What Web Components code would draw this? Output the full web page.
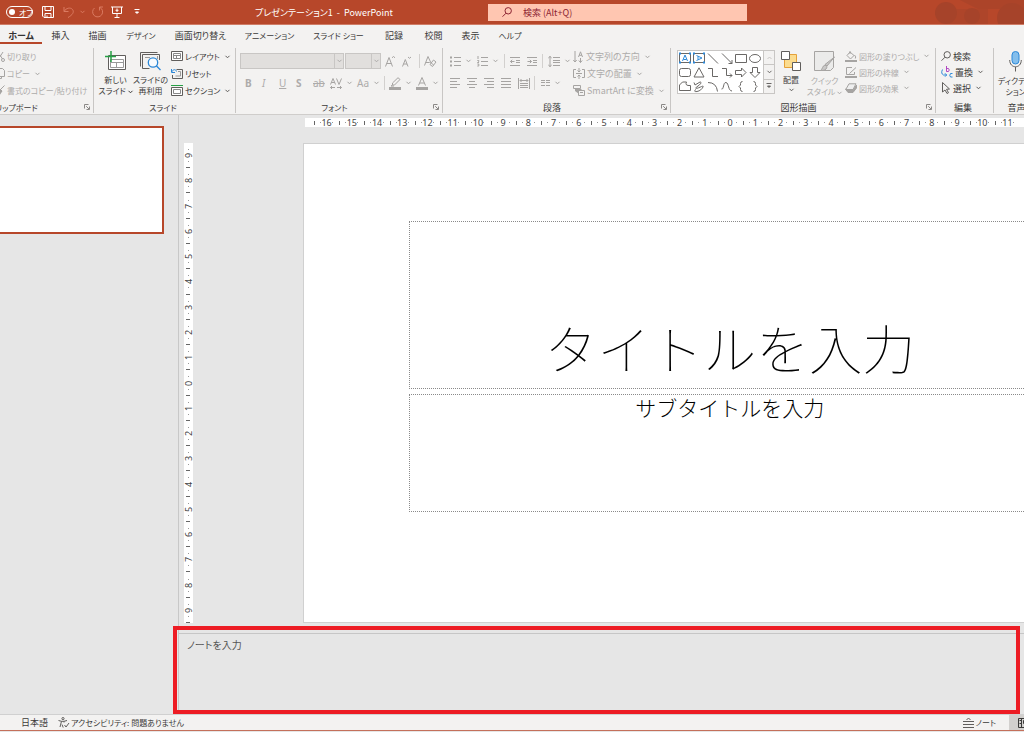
<!DOCTYPE html>
<html lang="ja">
<head>
<meta charset="utf-8">
<meta name="viewport" content="width=device-width, initial-scale=1">
<title>プレゼンテーション1 - PowerPoint</title>
<style>
  html, body { margin: 0; height: 100%; }
  body {
    font-family: "Noto Sans CJK JP", sans-serif;
    font-size: 9px;
    line-height: 11px;
    font-feature-settings: "palt";
    color: #3b3a39;
    background: #e6e6e6;
    overflow: hidden;
  }
</style>
</head>
<body>
<presentation-app></presentation-app>

<script>
/* ---------- icons: [width, height, drawing] ---------- */
const ICONS = {
  save: [12, 12, '<path d="M.5.5h11v11H2L.5 10z M3 .5v4h6v-4 M3 11.500v-4h6v4 M5 9.500v2"/>'],
  undo: [12, 12, '<path d="M1 1v4.500h4.500 M1.200 5.300C3 2 7.500 1 9.500 3.500S9.500 9 5 11.500"/>'],
  redo: [13, 12, '<path d="M8.500 4.500V1h3.500 M9 1.500A5 5 0 1 1 3.500 2"/>'],
  show: [12, 12, '<path d="M0 1h12 M1.500 1v6.500h9V1 M6 7.500V11 M3.500 11.500h5 M6 2.500v3.500 M4.500 4.300h3"/>'],
  more: [6, 6, '<path d="M.5.5h5"/><path d="M1.500 3l1.500 1.500L4.500 3z" fill="currentColor"/>'],
  chev: [5, 4, '<path d="M.5.8 2.500 2.800 4.500.8"/>'],
  up: [5, 4, '<path d="M.5 3 2.500 1 4.500 3"/>'],
  search: [10, 10, '<circle cx="6.200" cy="3.800" r="3.200"/><path d="M4 6.200.500 9.700"/>'],
  launch: [6, 6, '<path d="M.5 4.500v-4h4 M2.200 2.200l3 3 M5.500 2.500v3h-3"/>'],
  cut: [9, 11, '<path d="M2 1l4.500 7 M7 1 2.500 8"/><circle cx="2" cy="9" r="1.500"/><circle cx="7" cy="9" r="1.500"/>'],
  copy: [9, 11, '<path d="M3.500.500h3l2 2v6h-5z M3.500 2.500h-3v8h5v-2"/>'],
  brush: [9, 11, '<path d="M8.500.500 5 4 M3 3l3 3-3 4.500H.500z" /><path d="M3 3l3 3-2 2-3-3z" fill="currentColor"/>'],
  newslide: [21, 20, '<path fill="#fff" d="M3.500 4.500h17v14h-17z"/><path stroke="#999" d="M5.500 8.500h13v8h-13z M5.500 11.500h13 M11.500 11.500v5"/><path stroke="#27a046" stroke-width="1.500" d="M6 0v11 M0 5.500h11"/>'],
  reuse: [21, 20, '<path d="M.500 15.500V1.500h17 M19.500 9V3.500h-17v14h7"/><path stroke="#999" d="M17.500 5v3 M5 6.500h5"/><circle cx="13" cy="11.500" r="4.700" fill="#f7fbfe" stroke="#2b88d8" stroke-width="1.300"/><path stroke="#2b88d8" stroke-width="1.300" d="M16.300 14.800 20.500 19"/>'],
  layout: [12, 11, '<path fill="#fff" d="M.500.500h11v9H.500z"/><path stroke="#888" d="M2.500 2.500h7v5h-7z M2.500 4.500h7 M5.500 4.500v3"/>'],
  reset: [12, 11, '<path d="M5.500 1.500h6v9h-10V7"/><path stroke="#999" d="M7 3.500h2.500v4.500h-5"/><path stroke="#2b88d8" d="M.500 1v3.500H4 M.700 4C2 1 5 1 5.500 3.500"/>'],
  section: [12, 11, '<path stroke="#27a046" d="M0 .500h12"/><path fill="#fff" d="M.500 2.500h11v8H.500z"/><path stroke="#888" d="M2.500 4.500h7v4h-7z"/>'],
  bullets: [11, 10, '<path d="M4 1.500h7 M4 5.500h7 M4 9.500h7"/><path stroke-width="2" d="M0 1.500h2 M0 5.500h2 M0 9.500h2"/>'],
  numbers: [11, 10, '<path d="M4 1.500h7 M4 5.500h7 M4 9.500h7"/><path d="M1 0v3 M.300 4.500h1.500v1L.500 6.500h1.500 M.300 8h1.500v2H.300"/>'],
  outdent: [10, 9, '<path d="M0 .500h10 M6 3.500h4 M6 5.500h4 M0 8.500h10 M4.500 4.500H.500 M2.200 2.800.500 4.500l1.700 1.700"/>'],
  indent: [10, 9, '<path d="M0 .500h10 M6 3.500h4 M6 5.500h4 M0 8.500h10 M.500 4.500h4 M2.800 2.800l1.700 1.700-1.700 1.700"/>'],
  spacing: [12, 11, '<path d="M5 1.500h7 M5 4.500h7 M5 6.500h7 M5 9.500h7 M2 0v11 M.300 2 2 .500 3.700 2 M.300 9 2 10.500 3.700 9"/>'],
  left: [10, 10, '<path d="M0 .500h10 M0 3.500h7 M0 6.500h10 M0 9.500h7"/>'],
  center: [10, 10, '<path d="M0 .500h10 M2 3.500h6 M0 6.500h10 M2 9.500h6"/>'],
  right: [10, 10, '<path d="M0 .500h10 M3 3.500h7 M0 6.500h10 M3 9.500h7"/>'],
  justify: [10, 10, '<path d="M0 .500h10 M0 3.500h10 M0 6.500h10 M0 9.500h10"/>'],
  spread: [12, 11, '<path d="M.500 0v11 M11.500 0v11 M2 5.500h8 M2 7.500h8 M2 9.500h8 M2 2.500h8 M3.500 1 2 2.500 3.500 4 M8.500 1 10 2.500 8.500 4"/>'],
  columns: [9, 8, '<path d="M0 1.500h4 M5 1.500h4 M0 3.500h4 M5 3.500h4 M0 6.500h4 M5 6.500h4"/>'],
  textdir: [11, 12, '<path d="M2 0v11 M.300 9 2 11l1.700-2 M7.500 7v4.500 M5.800 9.500l1.700 2 1.700-2 M5.500 6 7.500.800 9.500 6 M6.200 4.300h2.600"/>'],
  textpos: [12, 11, '<path d="M3 1.500H.500v8H3 M9 1.500h2.500v8H9 M3 5.500h6 M6 0v4 M4.500 2.500 6 4l1.500-1.500 M6 11V7 M4.500 8.500 6 7l1.500 1.500"/>'],
  smartart: [12, 11, '<path d="M.500.500h7v3 M.500.500v3h3 M5.500 5.500h6v5h-6z M7 7.500h3"/><path fill="currentColor" stroke="none" d="M2 3h5l2 2H6v4L2 6z"/>'],
  pen: [12, 13, '<path d="M9 .700 11 2.500 5.500 8H3.500V6z M3.500 8 2 9h3"/><path stroke="none" fill="currentColor" d="M0 10h12v3H0z"/>'],
  color: [12, 13, '<path d="M2.500 8.500 6 .500l3.500 8 M3.700 6h4.600"/><path stroke="none" fill="currentColor" d="M0 10h12v3H0z"/>'],
  biga: [10, 11, '<path d="M.500 10.500 4 1.500l3.500 9 M1.700 7.500h4.600 M7 1.800 8.500.500 10 1.800"/>'],
  smalla: [9, 11, '<path d="M.500 10.500 3.300 3.500l2.700 7 M1.500 8h3.500 M6 1l1.500 1.300L9 1"/>'],
  clear: [12, 12, '<path d="M.500 10.500 4 1.500l3 6.500 M1.700 7.500h4 M6 9.500 9.500 5 12 7l-3.500 4.500z M7.200 8l2.500 2"/>'],
  tracking: [12, 13, '<path d="M.500 7.500 3 1.500l2.500 6 M1.300 5.500h3.400 M6.500 1.500 9 7.500l2.500-6 M.500 10.500h4.500 M2 9 .500 10.500 2 12 M7 10.500h4.500 M10 9l1.500 1.500L10 12"/>'],
  arrange: [20, 20, '<path fill="#fbdc8f" stroke="#e5a13a" d="M3.500 3.500h12v13h-12z"/><path fill="#fff" d="M.500.500h8v8h-8z M11.500 11.500h8v8h-8z"/>'],
  quick: [21, 21, '<path fill="#ebebea" d="M.500.500h19v16l-3 3H.500z"/><path fill="#c9c8c7" d="M20.500 6 13 15l-2-1.500z M11 14c2 .500 2.500 2.500 1 4-1 1.500-4 1.500-5.500 1.500 2-1 2-5 4.500-5.500z"/>'],
  fill: [12, 11, '<path d="M5 1 9 4.500 5.500 8 2 4.500z M5 3V0 M9.500 4q2 2 .800 3.500"/><path stroke="none" fill="currentColor" d="M0 9h12v2H0z"/>'],
  outline: [12, 11, '<path d="M7 .500H1.500v7H9.500V5 M11 .500 4.500 6.500"/><path stroke="none" fill="currentColor" d="M0 9h12v2H0z"/>'],
  effect: [12, 10, '<path fill="currentColor" d="M.500 6 3 9.500h5L11.500 5V2L8 7H2z"/><path fill="#eee" d="M4 .800h7L8 6.500H.800z"/>'],
  replace: [12, 12, '<path stroke="#b146c2" d="M5.500 0v5.500 M5.500 2.500h2q1.500 1.500 0 3h-2"/><path stroke="#2b88d8" d="M11.500 7.500h-2q-1.500 2 0 3.500h2 M1.500 3.500q-2 4 1 5.500h3 M4 7.300 5.700 9 4 10.700"/>'],
  select: [10, 12, '<path d="M1.500.500v9.500l2.500-2 2 3.500 1.500-.800-2-3.400 3-.300z"/>'],
  mic: [13, 21, '<rect x="3" y=".500" width="7" height="12.500" rx="3.500" fill="#83beec" stroke="#2b88d8"/><path d="M.700 9c0 9 11.600 9 11.600 0 M6.500 16v4.500"/>'],
  access: [11, 11, '<circle cx="5" cy="1.600" r="1.100"/><path d="M.500 3.500l3 .800L2 10 M9 3.500l-3 .800v1.200 M3.500 4.300H6 M6.500 8l1.500 2 3-4 M4 7.500l1.200 3"/>'],
  notes: [11, 11, '<path d="M3.500 3 5.500 1l2 2 M0 4.500h11 M0 7.500h11 M0 10.500h11"/>'],
  normal: [12, 10, '<path d="M.500.500h11v9H.500z M3.500 .5v9 M5.500 2.500h4v3H5.500z M1.500 2.500H3 M1.500 5.500H3"/>'],
  sTextH: [12, 11, '<path d="M.500.500h11v9H.500z"/><path stroke="#2b88d8" d="M3.500 8 6 2l2.500 6 M4.500 6.500h3"/><path stroke="#2b88d8" stroke-width="2" stroke-dasharray="2 8 2 7" d="M0 .5h12 M0 9.500h12"/>'],
  sTextV: [12, 11, '<path d="M.500.500h11v9H.500z"/><path stroke="#2b88d8" d="M3.500 2.500 9 5 3.500 7.500 M5 3.500v3"/><path stroke="#2b88d8" stroke-width="2" stroke-dasharray="2 8 2 7" d="M0 .5h12 M0 9.500h12"/>'],
  sLine: [12, 11, '<path d="M1 .500 11 10.500"/>'],
  sArrow: [12, 11, '<path d="M1 .500 11 10.500 M11 7v3.500H7.500"/>'],
  sRect: [12, 11, '<path d="M.500 1.500h11v8H.500z"/>'],
  sOval: [12, 11, '<ellipse cx="6" cy="5.500" rx="5.500" ry="4"/>'],
  sRound: [12, 11, '<rect x=".500" y="1.500" width="11" height="8" rx="2"/>'],
  sTri: [12, 11, '<path d="M6 .800 11 10H1z"/>'],
  sElbow: [12, 11, '<path d="M1 1.500h4.500v8h5.500"/>'],
  sElbowA: [12, 11, '<path d="M1 1.500h4.500v7h5.500 M9 6.500l2 2-2 2"/>'],
  sRight: [12, 11, '<path d="M.500 3.500h6V1L11 5.500 6.500 10V7.500h-6z"/>'],
  sDown: [12, 11, '<path d="M3.500.500h5v5h2.500L6 10.500 1 5.500H3.500z"/>'],
  sFree: [12, 11, '<path d="M.500 9.500V4l3-3h4q-2 4 4 3.500v5z"/>'],
  sScrib: [12, 11, '<path d="M1 1.500 2 4 7 1C9 1 8 3 5 5s-3 3 0 2 6-3 5-1-3 4-6 4.500-3-1-1-2"/>'],
  sArc: [12, 11, '<path d="M1 1.500q8.500 0 9.500 9"/>'],
  sCurve: [12, 11, '<path d="M.500 8C3 9 2 1 5 1.500S7 10 11 10"/>'],
  sBraceL: [12, 11, '<path d="M7.500.500Q5.500.500 5.500 2.500V4L4 5.500 5.500 7v1.500Q5.500 10.500 7.500 10.500"/>'],
  sBraceR: [12, 11, '<path d="M4.500.500Q6.500.500 6.500 2.500V4L8 5.500 6.500 7v1.500Q6.500 10.500 4.500 10.500"/>']
};

const define = (name, template, setup) => {
  const t = document.createElement('template');
  t.innerHTML = template;
  customElements.define(name, class extends HTMLElement {
    constructor() {
      super();
      this.attachShadow({ mode: 'open' }).append(t.content.cloneNode(true));
    }
    connectedCallback() { if (setup) setup(this, this.shadowRoot); }
  });
};

define('ui-icon', '<style>:host{display:block;flex:none}svg{display:block;overflow:visible}</style><svg aria-hidden="true" fill="none" stroke="currentColor"></svg>',
  (host, root) => {
    const [w, h, body] = ICONS[host.getAttribute('name')];
    const svg = root.querySelector('svg');
    svg.setAttribute('width', w);
    svg.setAttribute('height', h);
    svg.setAttribute('viewBox', `0 0 ${w} ${h}`);
    svg.innerHTML = body;
  });

/* Ribbon command: icon, optional label in the slot, optional drop-down arrow. */
define('ribbon-command', `
  <style>
    :host { display: block; flex: none; color: #3b3a39; --icon: #605e5c; }
    :host([off]) { color: #adabaa; --icon: #a6a4a2; }
    :host([small]), :host([big]) { font-size: 8px; }
    button { all: unset; box-sizing: border-box; display: flex; align-items: center; gap: 2px; width: 100%; height: 100%; white-space: nowrap; }
    ui-icon { color: var(--icon); }
    .chev { margin-left: 3px; }
    :host([big]) button { flex-direction: column; justify-content: flex-start; gap: 3px; text-align: center; }
    :host([big]) .chev { margin: 0; }
  </style>
  <button type="button"><slot></slot></button>`,
  (host, root) => {
    const button = root.querySelector('button');
    const make = (name, cls) => {
      const i = document.createElement('ui-icon');
      i.setAttribute('name', name);
      if (cls) i.className = cls;
      return i;
    };
    if (host.hasAttribute('icon')) button.prepend(make(host.getAttribute('icon')));
    if (host.hasAttribute('menu')) button.append(make('chev', 'chev'));
    if (host.hasAttribute('label')) button.setAttribute('aria-label', host.getAttribute('label'));
    if (host.hasAttribute('off')) button.disabled = true;
  });

define('ribbon-group', `
  <style>
    :host { display: flex; flex-direction: column; flex: none; box-sizing: border-box; border-right: 1px solid #c8c6c4; height: 65px; }
    .body { display: flex; height: 53px; }
    footer { display: flex; align-items: center; height: 12px; padding-right: 3px; }
    :host([small]) footer { font-size: 8px; }
    span { flex: 1; text-align: center; white-space: nowrap; }
    ui-icon { color: #8a8886; }
  </style>
  <div class="body"><slot></slot></div>
  <footer><span></span></footer>`,
  (host, root) => {
    root.querySelector('span').textContent = host.getAttribute('name');
    if (host.hasAttribute('launcher')) {
      const i = document.createElement('ui-icon');
      i.setAttribute('name', 'launch');
      root.querySelector('footer').append(i);
    }
  });

define('combo-box', `
  <style>
    :host { display: flex; box-sizing: border-box; height: 16px; border: 1px solid #c8c6c4; background: #e1dfdd; color: #adabaa; }
    select { all: unset; flex: 1; min-width: 0; }
    span { display: flex; align-items: center; justify-content: center; width: 8px; border-left: 1px solid #c8c6c4; }
  </style>
  <select disabled><option></option></select><span><ui-icon name="chev"></ui-icon></span>`,
  (host, root) => root.querySelector('select').setAttribute('aria-label', host.getAttribute('label')));

define('title-bar', `
  <style>
    :host { display: grid; grid-template-columns: 488fr 259fr 277fr; align-items: center; height: 25px; box-sizing: border-box; border-bottom: 1px solid #cf7c66; background: #b7472a; color: #fff; }
    .left { display: flex; align-items: center; height: 24px; }
    label { display: flex; align-items: center; gap: 4px; box-sizing: border-box; width: 27px; height: 12px; margin-left: 6px; padding-left: 2px; border: 1px solid #fff; border-radius: 6px; font-size: 8px; white-space: nowrap; }
    input[type=checkbox] { appearance: none; flex: none; width: 6px; height: 6px; margin: 0; border-radius: 50%; background: #fff; }
    .tools { display: flex; align-items: center; margin-left: 9px; }
    .undo { width: 28px; } .redo { width: 20px; } .save { width: 21px; } .show { width: 23px; }
    ribbon-command { color: #fff; --icon: #fff; }
    .dim { --icon: #da7a61; }
    h1 { margin: 0 0 0 115px; font-size: 9px; font-weight: 400; white-space: pre; }
    .search { display: flex; align-items: center; gap: 11px; height: 17px; padding-left: 14px; background: #ffc6b1; color: #8d2432; }
    .search input { all: unset; flex: 1; min-width: 0; font-size: 9px; }
    .search input::placeholder { color: #8d2432; opacity: 1; }
    .art { justify-self: end; height: 24px; width: 192px; max-width: 100%; }
    .art svg { display: block; width: 100%; height: 24px; }
  </style>
  <div class="left">
    <label><input type="checkbox" role="switch"><span>オフ</span></label>
    <div class="tools">
      <ribbon-command class="save" icon="save" label="上書き保存"></ribbon-command>
      <ribbon-command class="undo dim" icon="undo" menu label="元に戻す"></ribbon-command>
      <ribbon-command class="redo dim" icon="redo" label="繰り返し"></ribbon-command>
      <ribbon-command class="show" icon="show" label="先頭から開始"></ribbon-command>
      <ribbon-command icon="more" label="カスタマイズ"></ribbon-command>
    </div>
    <h1>プレゼンテーション1  -  PowerPoint</h1>
  </div>
  <div class="search"><ui-icon name="search"></ui-icon><input type="search" aria-label="検索" placeholder="検索 (Alt+Q)"></div>
  <div class="art"><svg viewBox="0 0 192 24" preserveAspectRatio="xMaxYMid slice" aria-hidden="true">
    <g fill="#a6432a"><circle cx="114" cy="13" r="11"/><circle cx="140" cy="16" r="8"/><path d="M114 9h42v15h-42z" opacity=".5"/><circle cx="180" cy="18" r="15"/><path d="M128 0h64v9h-46z" opacity=".7"/></g>
  </svg></div>`);

define('tab-strip', `
  <style>
    :host { display: block; height: 20px; background: #f3f2f1; }
    nav { display: flex; height: 19px; }
    a { box-sizing: border-box; display: flex; align-items: center; justify-content: center; padding-top: 3px; font-size: 9px; color: inherit; text-decoration: none; white-space: nowrap; border-bottom: 2px solid transparent; flex: none; }
    a[aria-current] { font-weight: 700; border-color: #b7472a; color: #333; }
    .kana { font-size: 8px; }
    .w42 { width: 42px; } .w36 { width: 37px; } .w50 { width: 50px; } .w70 { width: 69px; }
  </style>
  <nav>
    <a class="w42" href="#home" aria-current="page">ホーム</a>
    <a class="w36" href="#insert">挿入</a>
    <a class="w36" href="#draw">描画</a>
    <a class="w50 kana" href="#design">デザイン</a>
    <a class="w70" href="#transitions">画面切り替え</a>
    <a class="w70 kana" href="#animations">アニメーション</a>
    <a class="w70 kana" href="#slideshow">スライド ショー</a>
    <a class="w42" href="#record">記録</a>
    <a class="w36" href="#review">校閲</a>
    <a class="w36" href="#view">表示</a>
    <a class="w42 kana" href="#help">ヘルプ</a>
  </nav>`);

define('shape-gallery', `
  <style>
    :host { display: flex; flex: none; box-sizing: border-box; width: 98px; height: 44px; border: 1px solid #c8c6c4; background: #fff; color: #6a6866; }
    .grid { display: grid; grid-template-columns: repeat(6, 14px); grid-auto-rows: 14px; justify-items: center; align-items: start; padding-top: 2px; flex: 1; box-sizing: border-box; }
    .bar { display: flex; flex-direction: column; width: 10px; border-left: 1px solid #c8c6c4; background: #f3f2f1; }
    .bar button { all: unset; flex: 1; display: flex; align-items: center; justify-content: center; border-bottom: 1px solid #c8c6c4; }
    .bar button:last-child { border: 0; }
    .bar button:disabled { color: #c8c6c4; }
  </style>
  <div class="grid"></div>
  <div class="bar">
    <button type="button" disabled aria-label="上へ"><ui-icon name="up"></ui-icon></button>
    <button type="button" aria-label="下へ"><ui-icon name="chev"></ui-icon></button>
    <button type="button" aria-label="その他"><ui-icon name="more"></ui-icon></button>
  </div>`,
  (host, root) => {
    root.querySelector('.grid').innerHTML = ['sTextH', 'sTextV', 'sLine', 'sArrow', 'sRect', 'sOval', 'sRound', 'sTri', 'sElbow', 'sElbowA', 'sRight', 'sDown', 'sFree', 'sScrib', 'sArc', 'sCurve', 'sBraceL', 'sBraceR']
      .map(n => `<ui-icon name="${n}"></ui-icon>`).join('');
  });

define('ribbon-panel', `
  <style>
    :host { display: flex; box-sizing: border-box; height: 70px; padding-top: 3px; background: #f3f2f1; border-bottom: 1px solid #cfcdcb; }
    .col { display: flex; flex-direction: column; }
    .col ribbon-command { height: 17px; }
    .tight ribbon-command { height: 16px; }
    .row { display: flex; align-items: center; height: 22px; }
    .sep { width: 1px; height: 14px; background: #d2d0ce; }
    .clip { width: 152px; margin-left: -58px; } .slide { width: 142px; } .font { width: 207px; } .para { width: 228px; } .shape { width: 265px; } .edit { width: 58px; } .voice { width: 48px; border: 0; }
    .clip .col { margin-left: 54px; }
    .w17 { width: 17px; } .w26 { width: 27px; }
    .b { font-weight: 700; } .i { font-style: italic; } .u { text-decoration: underline; } .s { text-decoration: line-through; }
    .glyph { font-family: "Noto Sans", "Noto Sans CJK JP", sans-serif; font-size: 10px; }
    .big { width: 35px; padding-top: 3px; }
    .mid { width: 32px; }
    .in { display: inline-block; }
  </style>
  <ribbon-group small class="clip" name="クリップボード" launcher>
    <div class="col">
      <ribbon-command off small icon="cut">切り取り</ribbon-command>
      <ribbon-command off small icon="copy" menu>コピー</ribbon-command>
      <ribbon-command off small icon="brush">書式のコピー/貼り付け</ribbon-command>
    </div>
  </ribbon-group>
  <ribbon-group small class="slide" name="スライド">
    <ribbon-command big class="big" style="margin-left:4px" icon="newslide"><span>新しい<br>スライド <ui-icon name="chev" class="in"></ui-icon></span></ribbon-command>
    <ribbon-command big class="big" icon="reuse"><span>スライドの<br>再利用</span></ribbon-command>
    <div class="col" style="margin-left:3px">
      <ribbon-command small icon="layout" menu>レイアウト</ribbon-command>
      <ribbon-command small icon="reset">リセット</ribbon-command>
      <ribbon-command small icon="section" menu>セクション</ribbon-command>
    </div>
  </ribbon-group>
  <ribbon-group small class="font" name="フォント" launcher>
    <div class="col" style="margin-left:4px; padding-top:2px">
      <div class="row">
        <combo-box label="フォント" style="width:104px"></combo-box>
        <combo-box label="フォント サイズ" style="width:36px; margin:0 4px 0 1px"></combo-box>
        <ribbon-command off class="w17" icon="biga" label="フォント サイズの拡大"></ribbon-command>
        <ribbon-command off class="w17" icon="smalla" label="フォント サイズの縮小"></ribbon-command>
        <div class="sep"></div>
        <ribbon-command off style="margin-left:4px" icon="clear" label="書式のクリア"></ribbon-command>
      </div>
      <div class="row glyph" style="padding-left:5px">
        <ribbon-command off class="w17"><span class="b">B</span></ribbon-command>
        <ribbon-command off class="w17"><span class="i">I</span></ribbon-command>
        <ribbon-command off class="w17"><span class="u">U</span></ribbon-command>
        <ribbon-command off class="w17"><span class="b">S</span></ribbon-command>
        <ribbon-command off class="w17"><span class="s">ab</span></ribbon-command>
        <ribbon-command off class="w26" icon="tracking" menu label="文字の間隔"></ribbon-command>
        <ribbon-command off class="w26" menu>Aa</ribbon-command>
        <div class="sep"></div>
        <ribbon-command off class="w26" style="margin-left:4px" icon="pen" menu label="蛍光ペンの色"></ribbon-command>
        <ribbon-command off icon="color" menu label="フォントの色"></ribbon-command>
      </div>
    </div>
  </ribbon-group>
  <ribbon-group class="para" name="段落" launcher>
    <div class="col" style="width:130px; padding-top:2px">
      <div class="row" style="padding-left:7px">
        <ribbon-command off class="w26" icon="bullets" menu label="箇条書き"></ribbon-command>
        <ribbon-command off class="w26" icon="numbers" menu label="段落番号"></ribbon-command>
        <div class="sep"></div>
        <ribbon-command off class="w17" style="margin-left:5px" icon="outdent" label="インデントを減らす"></ribbon-command>
        <ribbon-command off icon="indent" label="インデントを増やす"></ribbon-command>
        <div class="sep" style="margin:0 5px"></div>
        <ribbon-command off icon="spacing" menu label="行間"></ribbon-command>
      </div>
      <div class="row" style="padding-left:7px">
        <ribbon-command off class="w17" icon="left" label="左揃え"></ribbon-command>
        <ribbon-command off class="w17" icon="center" label="中央揃え"></ribbon-command>
        <ribbon-command off class="w17" icon="right" label="右揃え"></ribbon-command>
        <ribbon-command off class="w17" icon="justify" label="両端揃え"></ribbon-command>
        <ribbon-command off icon="spread" label="均等割り付け"></ribbon-command>
        <div class="sep" style="margin:0 6px 0 4px"></div>
        <ribbon-command off icon="columns" menu label="段"></ribbon-command>
      </div>
    </div>
    <div class="col">
      <ribbon-command off icon="textdir" menu>文字列の方向</ribbon-command>
      <ribbon-command off icon="textpos" menu>文字の配置</ribbon-command>
      <ribbon-command off icon="smartart" menu>SmartArt に変換</ribbon-command>
    </div>
  </ribbon-group>
  <ribbon-group class="shape" name="図形描画" launcher>
    <shape-gallery style="margin:2px 0 0 6px"></shape-gallery>
    <ribbon-command big class="big mid" icon="arrange" menu><span>配置</span></ribbon-command>
    <ribbon-command off big class="big" icon="quick"><span>クイック<br>スタイル <ui-icon name="chev" class="in"></ui-icon></span></ribbon-command>
    <div class="col tight" style="margin-left:3px">
      <ribbon-command off small icon="fill" menu>図形の塗りつぶし</ribbon-command>
      <ribbon-command off small icon="outline" menu>図形の枠線</ribbon-command>
      <ribbon-command off small icon="effect" menu>図形の効果</ribbon-command>
    </div>
  </ribbon-group>
  <ribbon-group class="edit" name="編集">
    <div class="col tight" style="margin-left:5px">
      <ribbon-command icon="search">検索</ribbon-command>
      <ribbon-command icon="replace" menu>置換</ribbon-command>
      <ribbon-command icon="select" menu>選択</ribbon-command>
    </div>
  </ribbon-group>
  <ribbon-group class="voice" name="音声">
    <ribbon-command big class="big" icon="mic" style="margin-left:4px"><span>ディクテー<br>ション</span></ribbon-command>
  </ribbon-group>`);

/* Ruler with one numbered cell per centimetre. */
define('slide-ruler', `
  <style>
    :host { display: flex; background: #fff; color: #444; font: 9px/9px "Noto Sans", sans-serif; box-sizing: border-box; --dot: #999; --tick: #666; }
    span { flex: 1; min-width: 0; min-height: 0; display: flex; align-items: center; justify-content: center;
      background: linear-gradient(var(--tick) 0 0) 0 50% / 1px 4px no-repeat, linear-gradient(var(--dot) 0 0) 25% 50% / 1px 1px no-repeat, linear-gradient(var(--dot) 0 0) 75% 50% / 1px 1px no-repeat; }
    :host([vertical]) { writing-mode: vertical-rl; transform: rotate(180deg); }
    :host([vertical]) span { background: linear-gradient(var(--tick) 0 0) 50% 0 / 4px 1px no-repeat, linear-gradient(var(--dot) 0 0) 50% 25% / 1px 1px no-repeat, linear-gradient(var(--dot) 0 0) 50% 75% / 1px 1px no-repeat; }
  </style>`,
  (host, root) => {
    const from = +host.getAttribute('from'), to = +host.getAttribute('to');
    for (let n = from; n <= to; n++) {
      const cell = document.createElement('span');
      cell.textContent = Math.abs(n);
      root.append(cell);
    }
  });

define('slide-canvas', `
  <style>
    :host { display: block; overflow: hidden; min-height: 0; }
    article { box-sizing: border-box; height: 100%; aspect-ratio: 16 / 9; padding: 77px 105px 110px; display: grid; grid-template-rows: minmax(0, 168fr) minmax(0, 118fr); gap: 5px; background: #fff; border: 1px solid #d0d0d0; color: #000; text-align: center; font-feature-settings: normal; }
    h2, p { margin: 0; box-sizing: border-box; border: 1px dotted #8a8a8a; }
    h2 { display: flex; align-items: flex-end; justify-content: center; font-size: 53px; line-height: 62px; font-weight: 100; padding-bottom: 10px; }
    p { font-size: 21px; line-height: 24px; font-weight: 300; }
  </style>
  <article><h2>タイトルを入力</h2><p>サブタイトルを入力</p></article>`);

define('notes-pane', `
  <style>
    :host { display: block; box-sizing: border-box; height: 81px; border-top: 1px solid #c6c6c6; }
    textarea { box-sizing: border-box; display: block; width: 100%; height: 100%; margin: 0; padding: 4px 8px; border: 0; outline: 0; resize: none; background: none; font: inherit; font-size: 10px; line-height: 14px; color: #555; }
    textarea::placeholder { color: #555; opacity: 1; }
  </style>
  <textarea aria-label="ノート" placeholder="ノートを入力"></textarea>`);

define('status-bar', `
  <style>
    :host { display: flex; align-items: center; box-sizing: border-box; height: 17px; border-top: 1px solid #d0d0d0; border-bottom: 1px solid #c4705b; background: #f3f2f1; padding-left: 21px; }
    .access { margin-left: 10px; }
    .notes { margin-left: auto; }
    .view { display: flex; align-items: center; align-self: stretch; width: 15px; margin-left: 13px; padding-left: 9px; box-sizing: border-box; background: #d2d0ce; overflow: hidden; }
  </style>
  <span>日本語</span>
  <ribbon-command small class="access" icon="access">アクセシビリティ: 問題ありません</ribbon-command>
  <ribbon-command small class="notes" icon="notes">ノート</ribbon-command>
  <div class="view"><ui-icon name="normal"></ui-icon></div>`);

define('presentation-app', `
  <style>
    :host { display: flex; flex-direction: column; min-height: 100vh; box-sizing: border-box; padding-bottom: 1px; }
    main { flex: 1; display: grid; grid-template-columns: 178px minmax(0, 1fr); min-height: 0; }
    aside { box-sizing: border-box; border-right: 1px solid #c8c8c8; padding-top: 11px; width: 179px; }
    .thumb { box-sizing: border-box; width: 164px; height: 108px; border: 2px solid #b7472a; border-left: 0; background: #fff; }
    .work { display: flex; flex-direction: column; min-width: 0; position: relative; }
    .editor { flex: 1; display: grid; grid-template: 9px minmax(0, 1fr) / 9px minmax(0, 1fr); gap: 16px 110px; padding: 3px 0 10px 6px; min-height: 0; }
    .h { grid-column: 2; padding: 0 4px 0 9px; margin-left: 2px; }
    .v { grid-row: 2; }
    notes-pane { margin-left: 1px; }
    .mark { position: absolute; inset: auto 4px 0 -5px; height: 88px; box-sizing: border-box; border: 4px solid #ed1c24; pointer-events: none; }
  </style>
  <title-bar></title-bar>
  <tab-strip></tab-strip>
  <ribbon-panel></ribbon-panel>
  <main>
    <aside><div class="thumb"></div></aside>
    <section class="work">
      <div class="editor">
        <slide-ruler class="h" from="-16" to="11"></slide-ruler>
        <slide-ruler class="v" vertical from="-9" to="9"></slide-ruler>
        <slide-canvas></slide-canvas>
      </div>
      <notes-pane></notes-pane>
      <div class="mark"></div>
    </section>
  </main>
  <status-bar></status-bar>`);
</script>
</body>
</html>
